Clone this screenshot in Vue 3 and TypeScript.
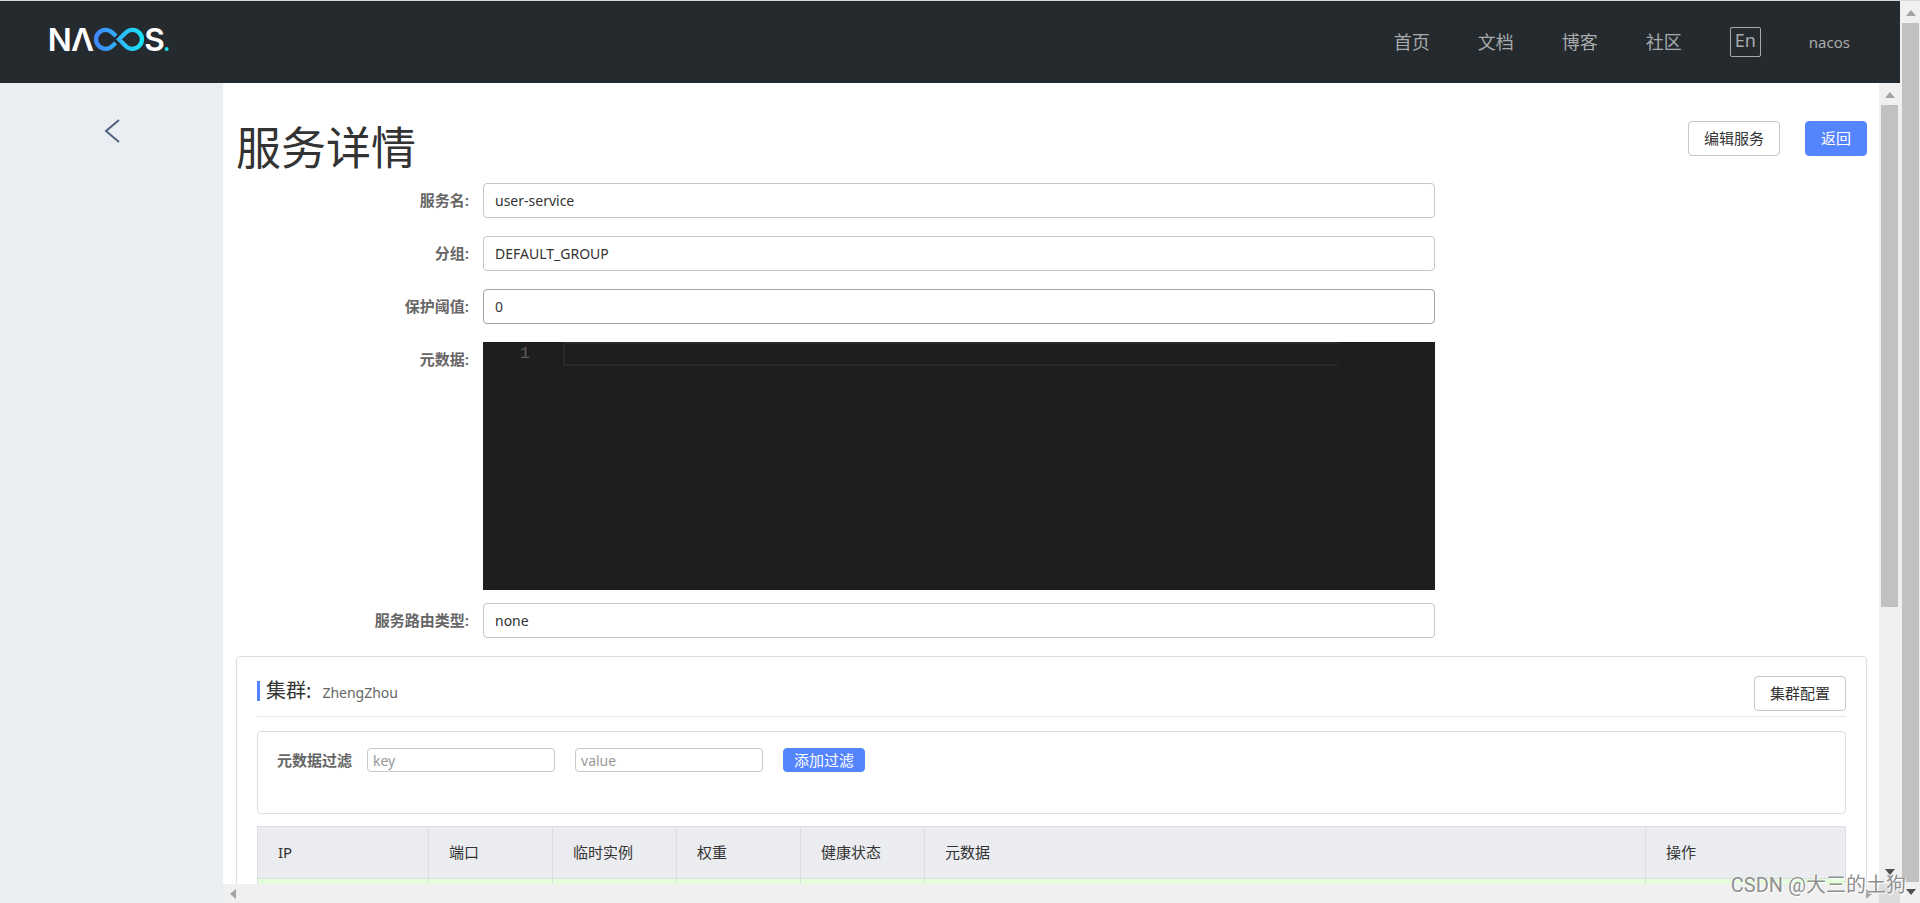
<script setup lang="ts">
import { ref } from 'vue'

interface Field {
  id: string
  label: string
  value: string
  active?: boolean
}

const navLinks: string[] = ['首页', '文档', '博客', '社区']

const fields = ref<Field[]>([
  { id: 'service-name', label: '服务名:', value: 'user-service' },
  { id: 'group', label: '分组:', value: 'DEFAULT_GROUP' },
  { id: 'threshold', label: '保护阈值:', value: '0', active: true },
])
const selectorType = ref('none')
const metadata = ref('')
const filterKey = ref('')
const filterValue = ref('')

const columns: { title: string; size: string }[] = [
  { title: 'IP', size: 'col-ip' },
  { title: '端口', size: 'col-small' },
  { title: '临时实例', size: 'col-small' },
  { title: '权重', size: 'col-small' },
  { title: '健康状态', size: 'col-small' },
  { title: '元数据', size: 'col-meta' },
  { title: '操作', size: 'col-action' },
]
</script>

<template>
  <div class="page">
    <div class="app">
      <header class="header">
        <a href="#" class="logo" aria-label="Nacos">
          <svg viewBox="60 54 357 69" width="119" height="23">
            <defs>
              <linearGradient id="loop" gradientUnits="userSpaceOnUse" x1="192" y1="0" x2="342" y2="0">
                <stop offset="0" stop-color="#4285ff" />
                <stop offset="1" stop-color="#19e4f4" />
              </linearGradient>
            </defs>
            <g class="logo-letters">
              <text x="53" y="123">N</text>
              <text x="123" y="123">Λ</text>
              <text x="343" y="123">S</text>
            </g>
            <g fill="none" stroke="url(#loop)" stroke-width="13">
              <path d="M258 78 L247 68 A28.5 28.5 0 1 0 247 108 L257 99" />
              <path d="M267 88 L287 68 A28.5 28.5 0 1 1 287 108 Z" />
            </g>
            <circle cx="410" cy="117" r="6" fill="#19dff0" />
          </svg>
        </a>
        <nav class="nav">
          <a v-for="link in navLinks" :key="link" href="#">{{ link }}</a>
          <button type="button" class="lang">En</button>
          <a href="#" class="user">nacos</a>
        </nav>
      </header>

      <div class="body">
        <aside class="sidebar">
          <button type="button" class="collapse" aria-label="返回">
            <svg viewBox="0 0 16 24" width="16" height="24">
              <path d="M15 1 L2 12 L15 23" fill="none" stroke="#50617c" stroke-width="2" />
            </svg>
          </button>
        </aside>

        <div class="frame">
          <main class="content">
            <div class="title-row">
              <h1>服务详情</h1>
              <div class="actions">
                <button type="button" class="btn">编辑服务</button>
                <button type="button" class="btn primary">返回</button>
              </div>
            </div>

            <form class="form" @submit.prevent>
              <div v-for="field in fields" :key="field.id" class="row">
                <label :for="field.id">{{ field.label }}</label>
                <input :id="field.id" v-model="field.value" type="text" :class="{ active: field.active }" readonly />
              </div>
              <div class="row editor-row">
                <label for="metadata">元数据:</label>
                <div class="editor">
                  <span class="line-number">1</span>
                  <textarea id="metadata" v-model="metadata" rows="1" readonly></textarea>
                </div>
              </div>
              <div class="row">
                <label for="selector">服务路由类型:</label>
                <input id="selector" v-model="selectorType" type="text" readonly />
              </div>
            </form>

            <section class="card">
              <div class="card-head">
                <h2>集群:</h2>
                <span class="cluster">ZhengZhou</span>
                <button type="button" class="btn">集群配置</button>
              </div>
              <div class="filter">
                <label for="filter-key">元数据过滤</label>
                <input id="filter-key" v-model="filterKey" type="text" placeholder="key" />
                <input v-model="filterValue" type="text" placeholder="value" aria-label="value" />
                <button type="button" class="btn primary small">添加过滤</button>
              </div>
              <table>
                <thead>
                  <tr>
                    <th v-for="column in columns" :key="column.title" :class="column.size" scope="col">
                      {{ column.title }}
                    </th>
                  </tr>
                </thead>
                <tbody>
                  <tr>
                    <td v-for="column in columns" :key="column.title"></td>
                  </tr>
                </tbody>
              </table>
            </section>
          </main>

          <div class="track inner">
            <svg class="up" viewBox="0 0 10 6" width="10" height="6"><path d="M0 6 L5 0 L10 6 Z" /></svg>
            <div class="thumb"></div>
            <svg class="down" viewBox="0 0 10 6" width="10" height="6"><path d="M0 0 L5 6 L10 0 Z" /></svg>
          </div>
          <div class="track horizontal">
            <svg viewBox="0 0 6 10" width="6" height="10"><path d="M6 0 L0 5 L6 10 Z" /></svg>
            <svg viewBox="0 0 6 10" width="6" height="10"><path d="M0 0 L6 5 L0 10 Z" /></svg>
          </div>
          <div class="corner"></div>
        </div>
      </div>
    </div>

    <div class="track outer">
      <svg class="up" viewBox="0 0 10 6" width="10" height="6"><path d="M0 6 L5 0 L10 6 Z" /></svg>
      <div class="thumb"></div>
      <svg class="down" viewBox="0 0 10 6" width="10" height="6"><path d="M0 0 L5 6 L10 0 Z" /></svg>
    </div>

    <div class="watermark">CSDN @大三的土狗</div>
  </div>
</template>

<style>
body {
  margin: 0;
  background: #fff;
}
</style>

<style scoped>
.page,
.page * {
  box-sizing: border-box;
}

.page {
  position: relative;
  display: flex;
  height: 100vh;
  overflow: hidden;
  border-top: 1px solid #d5d9da;
  font-family: 'Noto Sans', 'Noto Sans CJK SC', sans-serif;
  font-size: 15px;
  line-height: 20px;
  color: #333;
}

button,
input,
textarea {
  margin: 0;
  font: inherit;
}

a {
  text-decoration: none;
}

.app {
  flex: 1;
  min-width: 0;
  display: flex;
  flex-direction: column;
}

.header {
  flex: none;
  display: flex;
  align-items: center;
  justify-content: space-between;
  height: 82px;
  padding: 0 50px;
  background: #252a2f;
}

.logo {
  display: block;
  height: 28px;
}

.logo svg {
  display: block;
  overflow: visible;
}

.logo-letters {
  fill: #fff;
  font-family: Inter, sans-serif;
  font-size: 95px;
  font-weight: 600;
}

.nav {
  display: flex;
  align-items: center;
  gap: 48px;
  font-size: 18px;
}

.nav a {
  color: #a8aaac;
}

.nav .user {
  font-size: 15px;
}

.lang {
  width: 31px;
  height: 30px;
  padding: 0 0 4px;
  border: 1px solid #a8aaac;
  border-radius: 2px;
  background: transparent;
  color: #a8aaac;
  line-height: 24px;
}

.body {
  flex: 1;
  min-height: 0;
  display: flex;
}

.sidebar {
  flex: none;
  width: 223px;
  padding-top: 36px;
  background: #eaeef3;
  text-align: center;
}

.collapse {
  padding: 0;
  border: 0;
  background: transparent;
}

.collapse svg {
  display: block;
}

.frame {
  flex: 1;
  min-width: 0;
  display: grid;
  grid-template-columns: minmax(0, 1fr) 21px;
  grid-template-rows: minmax(0, 1fr) 19px;
}

.content {
  overflow: hidden;
  padding: 38px 12px 0 13px;
}

.title-row {
  display: flex;
  justify-content: space-between;
  align-items: flex-start;
  height: 62px;
}

h1 {
  margin: 0;
  font-size: 45px;
  line-height: 54px;
  font-weight: 400;
}

.actions {
  display: flex;
  gap: 25px;
}

.btn {
  height: 35px;
  padding: 0 15px 2px;
  border: 1px solid #c4c6cf;
  border-radius: 4px;
  background: #fff;
  color: #333;
  white-space: nowrap;
}

.btn.primary {
  border-color: #5584ff;
  background: #5584ff;
  color: #fff;
}

.btn.small {
  height: 24px;
  padding: 0 10px;
  line-height: 20px;
}

.row {
  display: grid;
  grid-template-columns: 247fr 952fr 432fr;
  margin-bottom: 18px;
}

.row label {
  padding-right: 14px;
  color: #666;
  font-weight: 600;
  line-height: 34px;
  text-align: right;
}

input {
  min-width: 0;
  border: 1px solid #c4c6cf;
  border-radius: 4px;
  background: #fff;
  color: #333;
  font-size: 14px;
}

.row input {
  height: 35px;
  padding: 0 11px;
}

.row input.active {
  border-color: #a0a2ad;
}

.editor-row {
  margin-bottom: 13px;
}

.editor {
  display: flex;
  align-items: flex-start;
  height: 248px;
  padding-right: 97px;
  background: #1e1e1e;
}

.line-number {
  width: 80px;
  padding-right: 33px;
  color: #5a5a5a;
  font-family: 'Liberation Mono', monospace;
  font-size: 17px;
  line-height: 24px;
  text-align: right;
}

.editor textarea {
  flex: 1;
  min-width: 0;
  height: 24px;
  padding: 0;
  border: 2px solid #282828;
  border-right: 0;
  background: transparent;
  color: #d4d4d4;
  resize: none;
  overflow: hidden;
}

.card {
  height: 400px;
  padding: 19px 20px;
  border: 1px solid #dcdee3;
  border-radius: 4px;
}

.card-head {
  display: flex;
  align-items: flex-start;
  height: 41px;
  border-bottom: 1px solid #e6e7eb;
}

h2 {
  margin: 5px 0 0;
  padding-left: 6px;
  border-left: 3px solid #5584ff;
  font-size: 20px;
  line-height: 20px;
  font-weight: 400;
}

.cluster {
  flex: 1;
  padding: 7px 0 0 11px;
  color: #666;
  font-size: 14px;
}

.filter {
  display: flex;
  align-items: flex-start;
  gap: 20px;
  height: 83px;
  margin: 14px 0 12px;
  padding: 16px 19px;
  border: 1px solid #dcdee3;
  border-radius: 4px;
}

.filter label {
  margin-right: -5px;
  color: #666;
  font-weight: 600;
  line-height: 24px;
}

.filter input {
  width: 188px;
  height: 24px;
  padding: 0 5px;
}

.filter input::placeholder {
  color: #999;
  opacity: 1;
}

table {
  width: 100%;
  table-layout: fixed;
  border-collapse: collapse;
}

th,
td {
  height: 52px;
  padding: 0 20px 2px;
  border: 1px solid #dcdee3;
  text-align: left;
}

th {
  background: #ebecf0;
  font-weight: 400;
}

td {
  background: #e4fdda;
}

.col-ip {
  width: 171px;
}

.col-small {
  width: 124px;
}

.col-action {
  width: 200px;
}

.track {
  display: flex;
  align-items: center;
  background: #f0f0f0;
  fill: #a3a3a3;
}

.track svg {
  flex: none;
  display: block;
}

.track .down {
  fill: #505050;
}

.inner,
.outer {
  flex-direction: column;
}

.inner {
  padding: 9px 1px;
}

.outer {
  flex: none;
  width: 20px;
  padding: 9px 0 8px 1px;
}

.thumb {
  width: 17px;
  margin: 7px 0;
  background: #c1c1c1;
}

.inner .thumb {
  flex: 0 1 502px;
  margin-bottom: auto;
}

.outer .thumb {
  flex: 1;
}

.horizontal {
  justify-content: space-between;
  padding: 0 7px;
}

.corner {
  background: #dcdcdc;
}

.watermark {
  position: absolute;
  right: 14px;
  bottom: 6px;
  color: #8f8f8f;
  font-family: Roboto, 'Noto Sans CJK SC', sans-serif;
  font-size: 20px;
  line-height: 24px;
  text-shadow: 1px 1px 0 #fff, -1px 0 0 rgba(255, 255, 255, 0.6);
}
</style>
